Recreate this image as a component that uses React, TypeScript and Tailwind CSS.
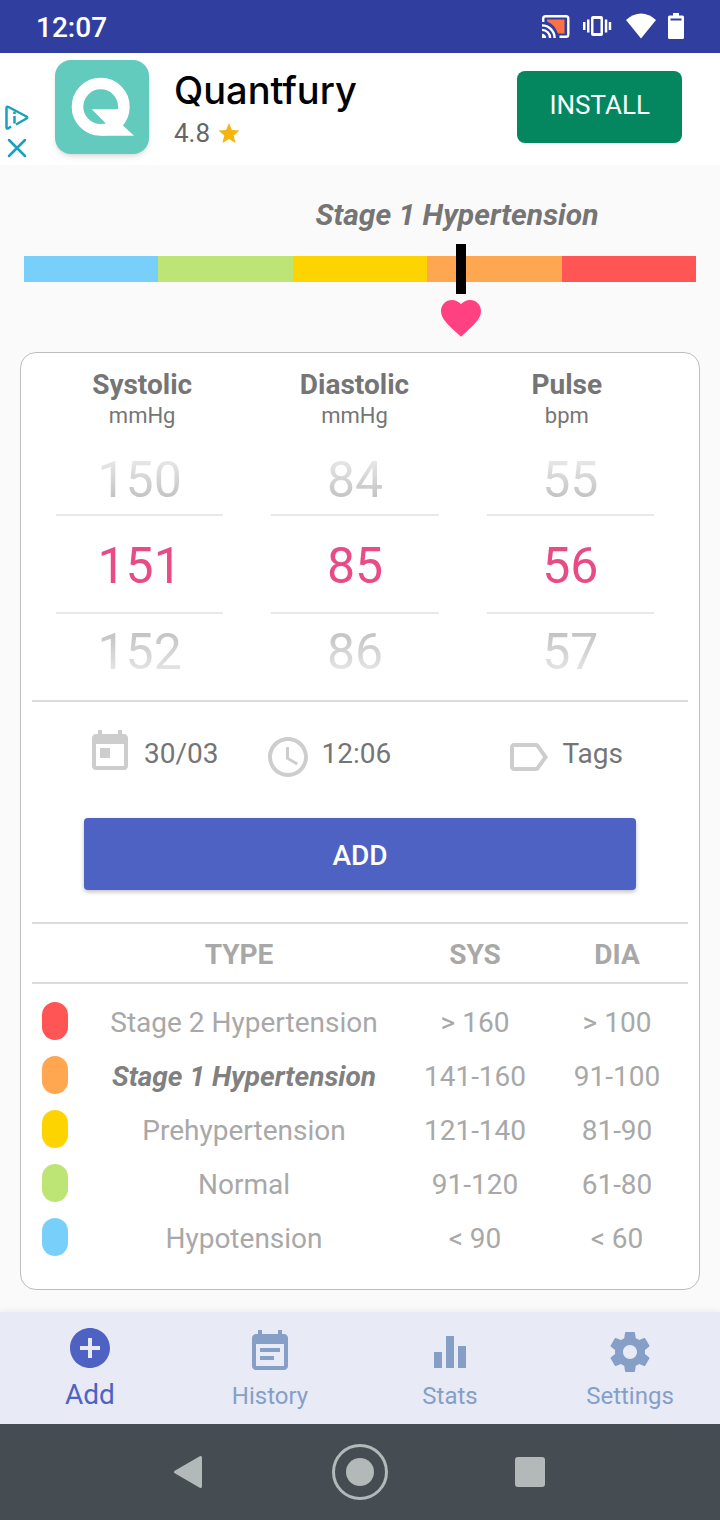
import { useState } from "react";
import type { ReactNode } from "react";

const CATEGORIES = [
  { name: "Stage 2 Hypertension", sys: "> 160", dia: "> 100", color: "bg-[#ff5555]" },
  { name: "Stage 1 Hypertension", sys: "141-160", dia: "91-100", color: "bg-[#ffa650]" },
  { name: "Prehypertension", sys: "121-140", dia: "81-90", color: "bg-[#fdd400]" },
  { name: "Normal", sys: "91-120", dia: "61-80", color: "bg-[#bde575]" },
  { name: "Hypotension", sys: "< 90", dia: "< 60", color: "bg-[#78d0fa]" },
];

const CURRENT = "Stage 1 Hypertension";

function Icon({ children, className = "" }: { children: ReactNode; className?: string }) {
  return (
    <svg viewBox="0 0 24 24" fill="currentColor" aria-hidden="true" className={`size-12 shrink-0 ${className}`}>
      {children}
    </svg>
  );
}

function StatusBar() {
  return (
    <header className="flex h-[53px] items-center justify-between bg-[#303f9f] px-9 text-white">
      <span className="pt-0.5 text-[28px] leading-8 font-medium">12:07</span>
      <svg width="144" height="28" viewBox="0 0 144 28" fill="currentColor" aria-hidden="true">
        {/* cast */}
        <path d="M7 6.500h17.500v14h-6.500Q14.500 11 7 8.500z" fill="#ff7043" />
        <path d="M3.200 9V5.500Q3.200 3.200 5.500 3.200H26Q28.300 3.200 28.300 5.500V21.500Q28.300 23.800 26 23.800H19.500" fill="none" stroke="currentColor" strokeWidth="2.400" />
        <path d="M2 20.800a4.200 4.200 0 0 1 4.200 4.200H2z" />
        <path d="M2 16.900a8.100 8.100 0 0 1 8.100 8.100M2 12.400A12.600 12.600 0 0 1 14.600 25" fill="none" stroke="currentColor" strokeWidth="2.400" />
        {/* vibrate */}
        <path d="M53 3h8q2 0 2 2v16q0 2-2 2h-8q-2 0-2-2V5q0-2 2-2zm.500 3v14h7V6zM43 9h2.500v8H43zm4-2.500h2.500v13H47zM64.800 6.500h2.500v13h-2.500zM68.700 9h2.500v8h-2.500z" />
        {/* wifi */}
        <path d="M86 7Q93 .500 101 .500T116 7L101 25.500z" />
        {/* battery */}
        <path d="M133 0h6v2.500h3.500q1.500 0 1.500 1.500v20.500q0 1.500-1.500 1.500h-13q-1.500 0-1.500-1.500V4q0-1.500 1.500-1.500h3.500zm-2.500 5.500V7.500h11V5.500z" fillRule="evenodd" />
      </svg>
    </header>
  );
}

function AdBanner() {
  return (
    <aside className="flex h-28 items-start bg-white pt-[7px] pr-[38px]">
      <div className="flex w-[55px] flex-col gap-[3px] pt-[44px] pl-1 text-[#18a0bd]">
        <a href="#ad-choices" aria-label="AdChoices">
          <svg width="26" height="28" viewBox="0 0 26 28" fill="none" stroke="currentColor" strokeWidth="2.500" strokeLinejoin="round">
            <path d="M7 22.500 4 24.500Q2.500 25 2.500 23V4Q2.500 2 4.500 3L22.500 12.500Q24 13.500 22.500 14.500L12 20.500" />
            <path d="M10.500 12v7.500M10.500 7.500V10" />
          </svg>
        </a>
        <button type="button" aria-label="Close ad">
          <svg width="26" height="26" viewBox="0 0 26 26" fill="none" stroke="currentColor" strokeWidth="2.500" strokeLinecap="round">
            <path d="M5 5l16 16M21 5L5 21" />
          </svg>
        </button>
      </div>
      <svg width="94" height="94" viewBox="0 0 94 94" className="rounded-2xl bg-[#62cbbd] shadow-md" aria-hidden="true">
        <circle cx="45.700" cy="46.700" r="23.200" fill="none" stroke="#fff" strokeWidth="11.600" />
        <path d="M45.700 75.700H79L68 65.500 63 60V49.300H36.700L51 63.500 46 69z" fill="#fff" />
      </svg>
      <div className="flex flex-1 flex-col pt-2 pl-[25px]">
        <span className="font-[Inter,sans-serif] text-[38px] leading-[44px] font-medium text-black">Quantfury</span>
        <span className="flex items-center gap-2 text-[26px] leading-[42px] text-[#666]">
          4.8
          <svg width="22" height="22" viewBox="0 0 24 24" fill="#f5b50f" aria-hidden="true">
            <path d="M12 1l3.200 7.800 8.300.600-6.400 5.400 2 8.200-7.100-4.500L4.900 23l2-8.200L.500 9.400l8.300-.600z" />
          </svg>
        </span>
      </div>
      <button type="button" className="mt-[11px] h-[72px] rounded-lg bg-[#04875f] px-8 pb-1 text-[26px] text-white">
        INSTALL
      </button>
    </aside>
  );
}

function Gauge() {
  return (
    <section className="px-6 pt-8">
      <h1 className="pl-[194px] text-center text-[30px] leading-9 font-bold text-[#757575] italic">{CURRENT}</h1>
      <div className="relative mt-[11px] h-[98px] pt-3">
        <div className="grid h-[26px] grid-cols-5">
          {[...CATEGORIES].reverse().map((c) => (
            <div key={c.name} className={c.color} />
          ))}
        </div>
        <div className="absolute top-0 left-[65%] flex -translate-x-1/2 flex-col items-center text-[#ff4081]">
          <div className="h-[50px] w-[10px] bg-black" />
          <Icon>
            <path d="M12 21.350l-1.450-1.320C5.400 15.360 2 12.280 2 8.500 2 5.420 4.420 3 7.500 3c1.740 0 3.410.810 4.500 2.090C13.090 3.810 14.760 3 16.500 3 19.580 3 22 5.420 22 8.500c0 3.780-3.400 6.860-8.550 11.540L12 21.350z" />
          </Icon>
        </div>
      </div>
    </section>
  );
}

type WheelProps = { id: string; value: number; onChange: (value: number) => void };

function Wheel({ id, value, onChange }: WheelProps) {
  return (
    <div className="flex min-w-0 flex-col text-[50px]">
      <button
        type="button"
        onClick={() => onChange(value - 1)}
        className="h-[68px] bg-linear-to-b from-[#e8e8e8] from-20% to-[#c0c0c0] to-80% bg-clip-text leading-[68px] text-transparent"
      >
        {value - 1}
      </button>
      <input
        id={id}
        inputMode="numeric"
        value={value}
        onChange={(e) => onChange(Number(e.target.value) || 0)}
        className="h-[100px] w-full border-y-2 border-[#e8e8e8] pt-1 text-center text-[#e94b86] outline-none"
      />
      <button
        type="button"
        onClick={() => onChange(value + 1)}
        className="h-[76px] bg-linear-to-b from-[#c0c0c0] from-20% to-[#e8e8e8] to-80% bg-clip-text leading-[76px] text-transparent"
      >
        {value + 1}
      </button>
    </div>
  );
}

function Measurements() {
  const [systolic, setSystolic] = useState(151);
  const [diastolic, setDiastolic] = useState(85);
  const [pulse, setPulse] = useState(56);
  const fields = [
    { id: "systolic", label: "Systolic", unit: "mmHg", value: systolic, set: setSystolic },
    { id: "diastolic", label: "Diastolic", unit: "mmHg", value: diastolic, set: setDiastolic },
    { id: "pulse", label: "Pulse", unit: "bpm", value: pulse, set: setPulse },
  ];

  return (
    <>
      <div className="grid grid-cols-3 pt-4 pr-[26px] pl-[15px] text-center text-[#757575]">
        {fields.map((f) => (
          <label key={f.id} htmlFor={f.id} className="flex flex-col">
            <span className="text-[28px] leading-8 font-bold">{f.label}</span>
            <span className="text-[22px] leading-[30px]">{f.unit}</span>
          </label>
        ))}
      </div>
      <div className="mt-[15px] mb-[10px] grid grid-cols-3 gap-12 pr-[45px] pl-[35px]">
        {fields.map((f) => (
          <Wheel key={f.id} id={f.id} value={f.value} onChange={f.set} />
        ))}
      </div>
    </>
  );
}

function EntryDetails() {
  return (
    <div className="flex items-center gap-[45px] pt-[21px] pr-[76px] pb-[37px] pl-[65px] text-[28px] leading-8 text-[#757575]">
      <button type="button" className="flex items-center gap-[10px]">
        <Icon className="text-[#cdcdcd]">
          <path d="M19 3h-1V1h-2v2H8V1H6v2H5c-1.110 0-1.990.900-1.990 2L3 19c0 1.100.890 2 2 2h14c1.100 0 2-.900 2-2V5c0-1.100-.900-2-2-2zm0 16H5V8h14v11zM7 10h5v5H7z" />
        </Icon>
        <span className="pt-1">30/03</span>
      </button>
      <button type="button" className="flex items-center gap-[10px]">
        <Icon className="mt-[10px] text-[#cdcdcd]">
          <path d="M11.990 2C6.470 2 2 6.480 2 12s4.470 10 9.990 10C17.520 22 22 17.520 22 12S17.520 2 11.990 2zM12 20c-4.420 0-8-3.580-8-8s3.580-8 8-8 8 3.580 8 8-3.580 8-8 8zM12.500 7H11v6l5.250 3.150.750-1.230-4.500-2.670z" />
        </Icon>
        <span className="pt-1">12:06</span>
      </button>
      <button type="button" className="ml-auto flex items-center gap-[10px]">
        <Icon className="mt-[10px] text-[#cdcdcd]">
          <path d="M17.630 5.840C17.270 5.330 16.670 5 16 5L5 5.010C3.900 5.010 3 5.900 3 7v10c0 1.100.900 1.990 2 1.990L16 19c.670 0 1.270-.330 1.630-.840L22 12l-4.370-6.160zM16 17H5V7h11l3.550 5L16 17z" />
        </Icon>
        <span className="pt-1">Tags</span>
      </button>
    </div>
  );
}

function CategoryTable() {
  return (
    <div className="mt-8 px-[11px] pb-[25px]">
      <table className="w-full table-fixed border-separate border-spacing-0 text-center text-[28px] leading-8 text-[#a8a8a8]">
        <colgroup>
          <col className="w-[52px]" />
          <col />
          <col className="w-[142px]" />
          <col className="w-[142px]" />
        </colgroup>
        <thead>
          <tr className="h-[62px]">
            <td className="border-y-2 border-[#dcdcdc]" />
            <th className="border-y-2 border-[#dcdcdc] p-0 pt-1 pr-[10px]">TYPE</th>
            <th className="border-y-2 border-[#dcdcdc] p-0 pt-1">SYS</th>
            <th className="border-y-2 border-[#dcdcdc] p-0 pt-1">DIA</th>
          </tr>
        </thead>
        <tbody className="before:block before:h-[10px] before:content-['']">
          {CATEGORIES.map((c) => (
            <tr key={c.name} className="h-[54px]">
              <td className="p-0 pl-[10px]">
                <div className={`h-[38px] w-[26px] rounded-full ${c.color}`} />
              </td>
              <td className={c.name === CURRENT ? "p-0 pt-1 font-bold text-[#808080] italic" : "p-0 pt-1"}>{c.name}</td>
              <td className="p-0 pt-1">{c.sys}</td>
              <td className="p-0 pt-1">{c.dia}</td>
            </tr>
          ))}
        </tbody>
      </table>
    </div>
  );
}

function TabBar() {
  const tab = "flex flex-col items-center pt-4 text-2xl leading-10 text-[#859fc7]";
  return (
    <nav className="grid h-28 grid-cols-4 bg-[#e8eaf6] shadow-[0_-2px_6px_rgba(0,0,0,0.05)]">
      <a href="#add" aria-current="page" className="flex flex-col items-center pt-3 text-[28px] leading-[46px] text-[#4d62c3]">
        <Icon>
          <path d="M12 2C6.480 2 2 6.480 2 12s4.480 10 10 10 10-4.480 10-10S17.520 2 12 2zm5 11h-4v4h-2v-4H7v-2h4V7h2v4h4v2z" />
        </Icon>
        Add
      </a>
      <a href="#history" className={tab}>
        <Icon>
          <path d="M17 10H7v2h10v-2zm2-7h-1V1h-2v2H8V1H6v2H5c-1.110 0-1.990.900-1.990 2L3 19c0 1.100.890 2 2 2h14c1.100 0 2-.900 2-2V5c0-1.100-.900-2-2-2zm0 16H5V8h14v11zm-5-5H7v2h7v-2z" />
        </Icon>
        History
      </a>
      <a href="#stats" className={tab}>
        <Icon>
          <path d="M10 20h4V4h-4v16zm-6 0h4v-8H4v8zM16 9v11h4V9h-4z" />
        </Icon>
        Stats
      </a>
      <a href="#settings" className={tab}>
        <Icon>
          <path d="M19.430 12.980c.040-.320.070-.640.070-.980s-.030-.660-.070-.980l2.110-1.650c.190-.150.240-.420.120-.640l-2-3.460c-.120-.220-.390-.300-.610-.220l-2.490 1c-.520-.400-1.080-.730-1.690-.980l-.380-2.650C14.460 2.180 14.250 2 14 2h-4c-.250 0-.460.180-.490.420l-.380 2.650c-.610.250-1.170.590-1.690.980l-2.490-1c-.230-.090-.490 0-.610.220l-2 3.460c-.130.220-.070.490.120.640l2.110 1.650c-.040.320-.070.650-.070.980s.030.660.070.980l-2.110 1.650c-.190.150-.240.420-.120.640l2 3.460c.120.220.390.300.610.220l2.490-1c.520.400 1.080.730 1.690.980l.380 2.650c.030.240.240.420.490.420h4c.250 0 .460-.180.490-.420l.380-2.650c.610-.250 1.170-.590 1.690-.980l2.490 1c.230.090.490 0 .610-.220l2-3.460c.120-.220.070-.490-.120-.640l-2.110-1.650zM12 15.500c-1.930 0-3.500-1.570-3.500-3.500s1.570-3.500 3.500-3.500 3.500 1.570 3.500 3.500-1.570 3.500-3.500 3.500z" />
        </Icon>
        Settings
      </a>
    </nav>
  );
}

function SystemBar() {
  return (
    <footer className="flex h-24 items-center justify-center gap-[115px] bg-[#454d52] text-[#b3b8b9]">
      <button type="button" aria-label="Back">
        <svg width="56" height="56" viewBox="0 0 56 56" fill="currentColor" stroke="currentColor" strokeWidth="3" strokeLinejoin="round">
          <path d="M14.500 28 39.500 13.500v29z" />
        </svg>
      </button>
      <button type="button" aria-label="Home">
        <svg width="56" height="56" viewBox="0 0 56 56">
          <circle cx="28" cy="28" r="26.500" fill="none" stroke="currentColor" strokeWidth="3" />
          <circle cx="28" cy="28" r="14" fill="currentColor" />
        </svg>
      </button>
      <button type="button" aria-label="Recent apps">
        <svg width="56" height="56" viewBox="0 0 56 56" fill="currentColor">
          <rect x="12" y="13" width="30" height="30" rx="3" />
        </svg>
      </button>
    </footer>
  );
}

export default function App() {
  return (
    <div className="flex min-h-screen flex-col bg-[#fafafa] font-[Roboto,sans-serif]">
      <StatusBar />
      <AdBanner />
      <main className="flex-1">
        <Gauge />
        <form
          onSubmit={(e) => e.preventDefault()}
          className="mx-5 mt-[10px] mb-[22px] rounded-2xl border border-[#bdbdbd] bg-white"
        >
          <Measurements />
          <hr className="mx-[11px] border-t-2 border-[#dcdcdc]" />
          <EntryDetails />
          <div className="px-[63px]">
            <button
              type="submit"
              className="h-[72px] w-full rounded bg-[#4d62c3] pt-1 text-[28px] font-medium text-white shadow-[0_2px_4px_rgba(0,0,0,0.25)]"
            >
              ADD
            </button>
          </div>
          <CategoryTable />
        </form>
      </main>
      <TabBar />
      <SystemBar />
    </div>
  );
}
